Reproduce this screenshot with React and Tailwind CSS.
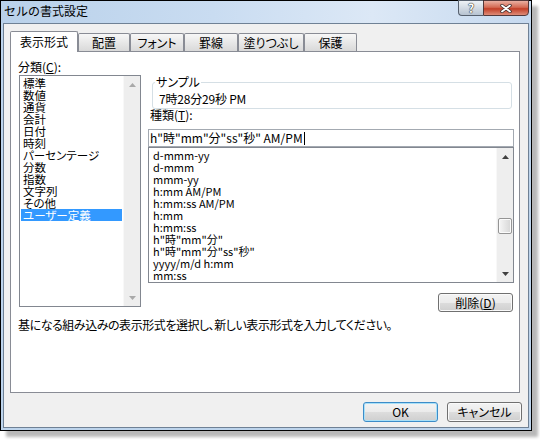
import React from "react";

const font = "font-['Noto_Sans_CJK_JP',sans-serif]";

function Arrow({ up, color }) {
  return (
    <svg width="7" height="4" viewBox="0 0 7 4">
      <polygon points={up ? "0,4 3.5,0 7,4" : "0,0 3.5,4 7,0"} fill={color} />
    </svg>
  );
}

function ScrollBar({ disabled, thumb }) {
  const c = disabled ? "#a9a9a9" : "#404040";
  return (
    <div className="w-[17px] h-full shrink-0 flex flex-col bg-[#eeeeee] border-l border-[#f8f8f8]">
      <div className="h-[17px] flex items-center justify-center">
        <Arrow up color={c} />
      </div>
      <div className="flex-1 flex flex-col">
        {thumb && (
          <>
            <div className="h-[53px]" />
            <div className="h-[16px] ml-px mr-px rounded-[2px] border border-[#959595] bg-linear-to-r from-[#f6f6f6] to-[#d6d6d6] shadow-[inset_0_0_0_1px_#fbfbfb]" />
          </>
        )}
      </div>
      <div className="h-[17px] flex items-center justify-center">
        <Arrow color={c} />
      </div>
    </div>
  );
}

function Btn({ children, def, className = "" }) {
  return (
    <div
      className={`w-[75px] flex items-center justify-center rounded-[3px] border bg-[linear-gradient(#f3f3f3,#ebebeb_50%,#dddddd_50%,#cfcfcf)] leading-[14px] ${
        def
          ? "border-[#3c8cc8] shadow-[inset_0_0_0_1px_#a8e0f8]"
          : "border-[#707070] shadow-[inset_0_0_0_1px_#fafafa]"
      } ${className}`}
    >
      {children}
    </div>
  );
}

const categories = [
  "標準",
  "数値",
  "通貨",
  "会計",
  "日付",
  "時刻",
  "パーセンテージ",
  "分数",
  "指数",
  "文字列",
  "その他",
  "ユーザー定義",
];

const formats = [
  "d-mmm-yy",
  "d-mmm",
  "mmm-yy",
  "h:mm AM/PM",
  "h:mm:ss AM/PM",
  "h:mm",
  "h:mm:ss",
  'h"時"mm"分"',
  'h"時"mm"分"ss"秒"',
  "yyyy/m/d h:mm",
  "mm:ss",
];

const tabs = [
  { t: "配置", w: "w-[52px]" },
  { t: "フォント", w: "w-[54px]" },
  { t: "罫線", w: "w-[54px]" },
  { t: "塗りつぶし", w: "w-[66px]" },
  { t: "保護", w: "w-[53px]" },
];

export default function App() {
  return (
    <div className={`w-[540px] h-[440px] bg-white ${font} text-[12px] text-black [font-feature-settings:'palt']`}>
      <div className="w-[532px] h-[431px] border border-black flex flex-col bg-[#bdd4ec] shadow-[6px_6px_3px_rgba(0,0,0,0.28)]">
        {/* title bar */}
        <div className="h-[22px] shrink-0 flex items-start pl-[3px] pr-[2px] bg-[linear-gradient(90deg,#b9d1ea_0%,#c9dcf1_40%,#dce8f6_70%,#c6d9ef_100%)]">
          <span className="mt-[3px] leading-[14px] [font-feature-settings:normal]">セルの書式設定</span>
          <div className="ml-auto -mt-px flex">
            <div className="w-[25px] h-[16px] border border-r-0 border-[#56606e] rounded-bl-[4px] bg-linear-to-b from-[#eef2f6] to-[#b7c3d1] flex items-center justify-center">
              <span className="text-white font-bold text-[12px] leading-[12px] [text-shadow:0_0_1px_#333,0_0_1px_#333,0_0_1px_#333]">?</span>
            </div>
            <div className="w-[46px] h-[16px] border border-[#53383a] rounded-br-[4px] bg-[linear-gradient(#eab0a2,#d46a54_45%,#c23e27_55%,#de8c78)] flex items-center justify-center">
              <svg width="12" height="9" viewBox="0 0 12 9">
                <path d="M2 1.5 L10 7.5 M10 1.5 L2 7.5" stroke="#3a2a2a" strokeWidth="3.4" strokeLinecap="round" />
                <path d="M2 1.5 L10 7.5 M10 1.5 L2 7.5" stroke="#ffffff" strokeWidth="1.8" strokeLinecap="round" />
              </svg>
            </div>
          </div>
        </div>

        {/* client area */}
        <div className="flex-1 mx-[2px] mb-[2px] border border-[#6f8195] bg-[#f0f0f0] flex flex-col pt-[7px] pl-[6px] pr-[8px]">
          {/* tabs */}
          <div className="flex items-end h-[21px] relative z-10">
            <div className="w-[68px] h-[21px] bg-white border border-b-0 border-[#898c95] rounded-t-[2px] flex justify-center pt-[3px] leading-[14px]">
              表示形式
            </div>
            {tabs.map((x) => (
              <div
                key={x.t}
                className={`${x.w} h-[18px] mb-px border border-b-0 border-[#898c95] rounded-t-[2px] bg-linear-to-b from-[#f7f7f7] to-[#d9d9d9] flex justify-center pt-[2px] leading-[14px]`}
              >
                {x.t}
              </div>
            ))}
          </div>

          {/* panel */}
          <div className="-mt-px h-[342px] border border-[#898c95] bg-white flex flex-col pl-[8px] pt-[8px]">
            <div className="flex">
              {/* left column */}
              <div className="w-[122px] flex flex-col">
                <div className="leading-[14px] -ml-px">
                  分類(<span className="underline">C</span>):
                </div>
                <div className="mt-px h-[232px] border border-[#828790] flex">
                  <div className="flex-1 flex flex-col pt-px pl-px pr-px">
                    {categories.map((c) => (
                      <div
                        key={c}
                        className={`h-[12px] leading-[12px] text-[11.5px] pl-[2px] whitespace-nowrap ${
                          c === "ユーザー定義" ? "bg-[#3399ff] text-white" : ""
                        }`}
                      >
                        {c}
                      </div>
                    ))}
                  </div>
                  <ScrollBar disabled />
                </div>
              </div>

              {/* right column */}
              <div className="ml-[7px] w-[366px] flex flex-col">
                <fieldset className="mt-[16px] ml-[4px] mr-[2px] border border-[#d5dfe5] rounded-[3px] pl-[6px] pt-[4px] pb-[2px]">
                  <legend className="-ml-[4px] px-[1px] leading-[12px]">サンプル</legend>
                  <div className="leading-[14px] tracking-[-0.2px]">7時28分29秒 PM</div>
                </fieldset>
                <div className="-mt-px leading-[14px] ml-[2px]">
                  種類(<span className="underline">T</span>):
                </div>
                <div className="mt-[7px] h-[18px] border border-[#a3a9b1] flex items-center pl-[1px] leading-[14px] whitespace-nowrap">
                  <span>h"時"mm"分"ss"秒" AM/PM</span>
                  <span className="inline-block w-px h-[13px] bg-black ml-px" />
                </div>
                <div className="h-[136px] border border-[#828790] flex">
                  <div className="flex-1 flex flex-col pt-px pl-[4px] overflow-hidden">
                    {formats.map((f) => (
                      <div key={f} className="h-[12px] leading-[12px] text-[11px] whitespace-nowrap">
                        {f}
                      </div>
                    ))}
                  </div>
                  <ScrollBar thumb />
                </div>
                <Btn className="mt-[10px] self-end mr-[1px] h-[19px]">
                  削除(<span className="underline">D</span>)
                </Btn>
              </div>
            </div>
            <div className="mt-[6px] -ml-px leading-[14px] whitespace-nowrap tracking-[-0.45px]">
              基になる組み込みの表示形式を選択し、新しい表示形式を入力してください。
            </div>
          </div>

          {/* buttons */}
          <div className="mt-[9px] -mr-[2px] flex justify-end gap-[9px]">
            <Btn def className="h-[20px]">
              OK
            </Btn>
            <Btn className="h-[20px]">キャンセル</Btn>
          </div>
        </div>
      </div>
    </div>
  );
}
